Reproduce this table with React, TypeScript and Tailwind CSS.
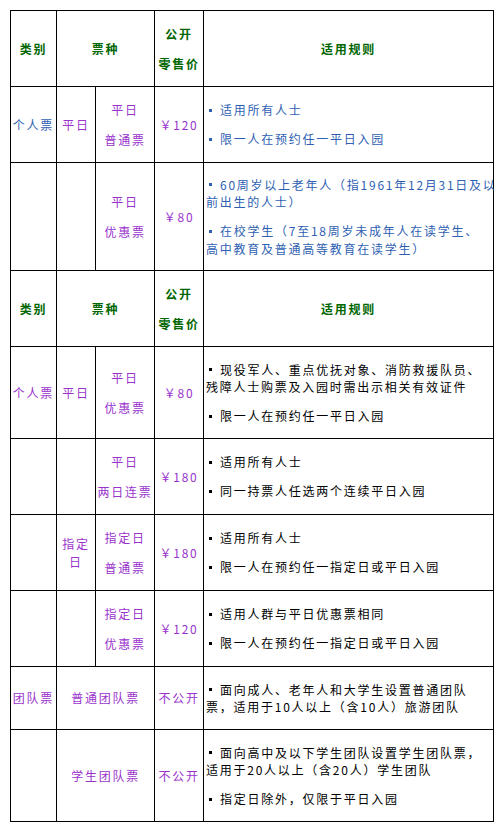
import React from 'react';

const GREEN = 'text-[#006600]';
const PURPLE = 'text-[#9933cc]';
const BLUE = 'text-[#2f5fb3]';
const BLACK = 'text-black';

const cell = 'border border-black align-middle p-0';

function Lines({ lines, gap = 'mt-[12.5px]' }: { lines: string[]; gap?: string }) {
  return (
    <>
      {lines.map((l, i) => (
        <p key={i} className={i > 0 ? gap : ''}>
          {l}
        </p>
      ))}
    </>
  );
}

function Rules({ items, color }: { items: string[][]; color: string }) {
  return (
    <div className={`pl-[2px] text-left ${color}`}>
      {items.map((lines, i) => (
        <p key={i} className={`whitespace-nowrap ${i > 0 ? 'mt-[11.5px]' : ''}`}>
          <span className="inline-block w-[3px] h-[3px] bg-current align-middle ml-[3px] mr-[8px] mb-[3px]" />
          {lines.map((l, j) => (
            <React.Fragment key={j}>
              {j > 0 && <br />}
              {l}
            </React.Fragment>
          ))}
        </p>
      ))}
    </div>
  );
}

function HeaderRow() {
  return (
    <tr className="h-[76px]">
      <td className={`${cell} text-center font-bold ${GREEN}`}>类别</td>
      <td colSpan={2} className={`${cell} text-center font-bold ${GREEN}`}>
        票种
      </td>
      <td className={`${cell} text-center font-bold ${GREEN}`}>
        <Lines lines={['公开', '零售价']} />
      </td>
      <td className={`${cell} text-center font-bold ${GREEN}`}>适用规则</td>
    </tr>
  );
}

type Row = {
  h: string;
  cat?: string;
  catColor?: string;
  sub?: string[];
  name: string[];
  span?: boolean;
  price: string;
  rules: string[][];
  rulesColor: string;
};

const ROWS_A: Row[] = [
  {
    h: 'h-[76px]',
    cat: '个人票',
    catColor: BLUE,
    sub: ['平日'],
    name: ['平日', '普通票'],
    price: '￥120',
    rules: [['适用所有人士'], ['限一人在预约任一平日入园']],
    rulesColor: BLUE,
  },
  {
    h: 'h-[108px]',
    name: ['平日', '优惠票'],
    price: '￥80',
    rules: [
      ['60周岁以上老年人（指1961年12月31日及以', '前出生的人士）'],
      ['在校学生（7至18周岁未成年人在读学生、', '高中教育及普通高等教育在读学生）'],
    ],
    rulesColor: BLUE,
  },
];

const ROWS_B: Row[] = [
  {
    h: 'h-[92px]',
    cat: '个人票',
    catColor: PURPLE,
    sub: ['平日'],
    name: ['平日', '优惠票'],
    price: '￥80',
    rules: [
      ['现役军人、重点优抚对象、消防救援队员、', '残障人士购票及入园时需出示相关有效证件'],
      ['限一人在预约任一平日入园'],
    ],
    rulesColor: BLACK,
  },
  {
    h: 'h-[76px]',
    name: ['平日', '两日连票'],
    price: '￥180',
    rules: [['适用所有人士'], ['同一持票人任选两个连续平日入园']],
    rulesColor: BLACK,
  },
  {
    h: 'h-[76px]',
    sub: ['指定', '日'],
    name: ['指定日', '普通票'],
    price: '￥180',
    rules: [['适用所有人士'], ['限一人在预约任一指定日或平日入园']],
    rulesColor: BLACK,
  },
  {
    h: 'h-[76px]',
    name: ['指定日', '优惠票'],
    price: '￥120',
    rules: [['适用人群与平日优惠票相同'], ['限一人在预约任一指定日或平日入园']],
    rulesColor: BLACK,
  },
  {
    h: 'h-[63px]',
    cat: '团队票',
    catColor: PURPLE,
    span: true,
    name: ['普通团队票'],
    price: '不公开',
    rules: [['面向成人、老年人和大学生设置普通团队', '票，适用于10人以上（含10人）旅游团队']],
    rulesColor: BLACK,
  },
  {
    h: 'h-[92px]',
    span: true,
    name: ['学生团队票'],
    price: '不公开',
    rules: [
      ['面向高中及以下学生团队设置学生团队票，', '适用于20人以上（含20人）学生团队'],
      ['指定日除外，仅限于平日入园'],
    ],
    rulesColor: BLACK,
  },
];

function BodyRow({ r }: { r: Row }) {
  return (
    <tr className={r.h}>
      <td className={`${cell} text-center ${r.catColor ?? ''}`}>{r.cat ?? ''}</td>
      {r.span ? (
        <td colSpan={2} className={`${cell} text-center ${PURPLE}`}>
          {r.name[0]}
        </td>
      ) : (
        <>
          <td className={`${cell} text-center ${PURPLE}`}>
            {r.sub ? (
              <div>
                {r.sub.map((s, i) => (
                  <p key={i}>{s}</p>
                ))}
              </div>
            ) : (
              ''
            )}
          </td>
          <td className={`${cell} text-center ${PURPLE}`}>
            <Lines lines={r.name} />
          </td>
        </>
      )}
      <td className={`${cell} text-center ${PURPLE}`}>{r.price}</td>
      <td className={cell}>
        <Rules items={r.rules} color={r.rulesColor} />
      </td>
    </tr>
  );
}

export default function App() {
  return (
    <div
      className="w-[502px] h-[830px] bg-white pt-[10px] pl-[10px] text-[12px] leading-[17.5px] tracking-[1.75px]"
      style={{ fontFamily: '"Noto Sans CJK SC", sans-serif' }}
    >
      <table className="border-collapse table-fixed w-[483px] border border-black">
        <colgroup>
          <col className="w-[46px]" />
          <col className="w-[39px]" />
          <col className="w-[59px]" />
          <col className="w-[49px]" />
          <col className="w-[290px]" />
        </colgroup>
        <tbody>
          <HeaderRow />
          {ROWS_A.map((r, i) => (
            <BodyRow key={`a${i}`} r={r} />
          ))}
          <HeaderRow />
          {ROWS_B.map((r, i) => (
            <BodyRow key={`b${i}`} r={r} />
          ))}
        </tbody>
      </table>
    </div>
  );
}
